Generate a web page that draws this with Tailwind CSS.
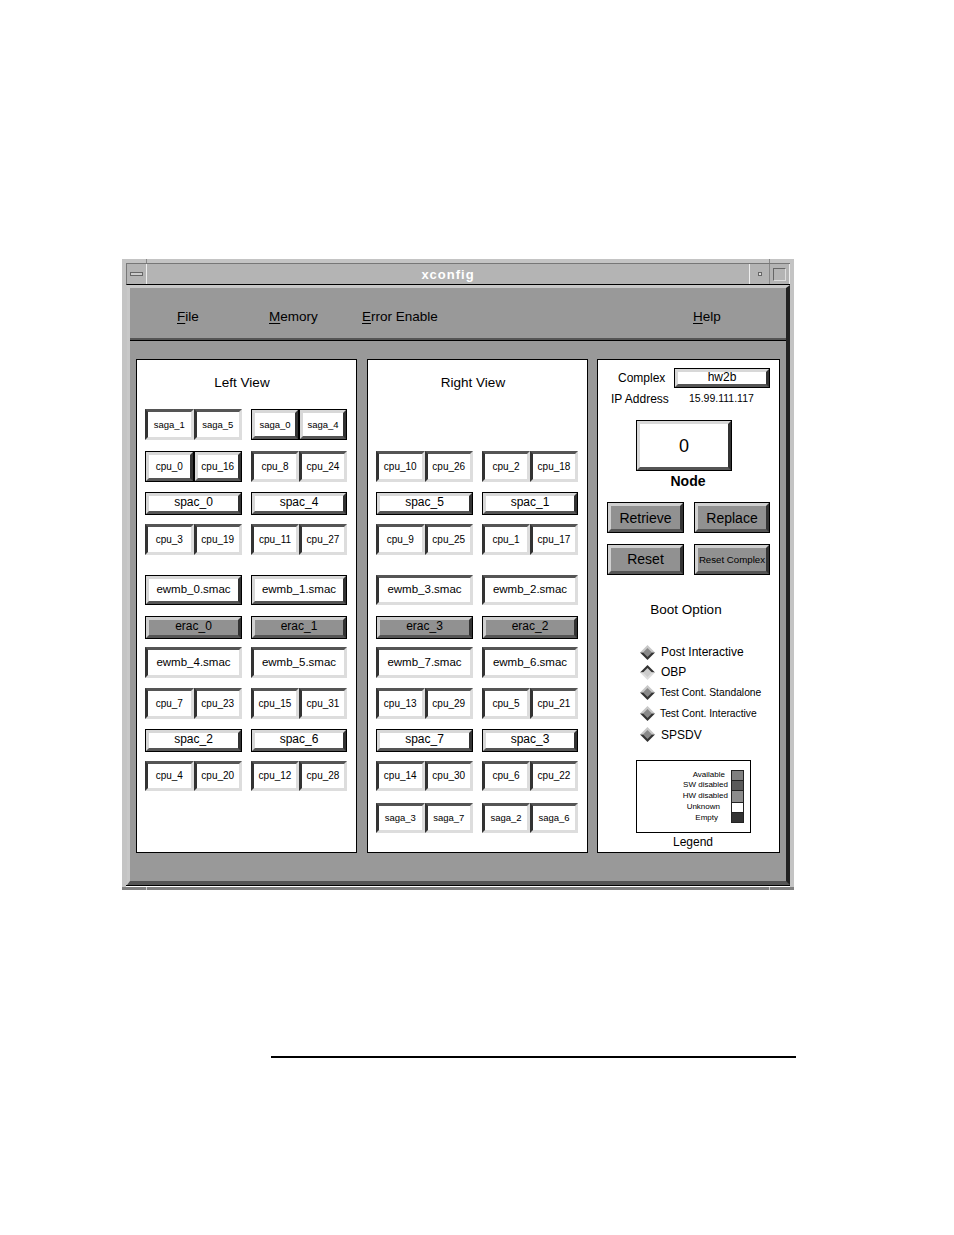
<!DOCTYPE html>
<html lang="en">
<head>
  <meta charset="UTF-8" />
  <title>xconfig</title>
  <script src="https://cdn.jsdelivr.net/npm/@tailwindcss/browser@4"></script>
</head>
<body class="bg-white text-black font-['Liberation_Sans',sans-serif]">
  <div class="pt-[259px] pl-[122px]">
    <div class="w-[672px] bg-[#c4c4c4]">
      <!-- resize handles in the frame -->
      <div class="flex h-[4px] pl-[24px]">
        <span class="w-px bg-[#888]"></span>
        <span class="w-px ml-[622px] bg-[#888]"></span>
      </div>
      <div class="pl-[4px] pr-[4px]">
        <!-- title bar -->
        <div class="flex h-[22px] bg-[#b4b4b4] border-t border-l border-[#777] border-b border-b-black">
          <div class="w-[20px] flex items-center justify-center border-r border-r-[#eee]">
            <div class="w-[13px] h-[4px] bg-[#ccc] border border-[#666]"></div>
          </div>
          <div class="flex-1 flex items-center justify-center pt-[2px] text-[13px] font-bold tracking-[1px] text-white">xconfig</div>
          <div class="w-[21px] flex items-center justify-center border-l border-l-[#eee] border-r border-r-[#888]">
            <div class="w-[4px] h-[4px] bg-[#ddd] border border-[#666]"></div>
          </div>
          <div class="w-[20px] flex items-center justify-center border-r border-r-[#eee]">
            <div class="w-[13px] h-[13px] border border-[#666] border-r-[#ddd] border-b-[#ddd]"></div>
          </div>
        </div>
        <!-- main window -->
        <div class="ml-px border-t-[3px] border-l-[3px] border-r-[4px] border-b-[4px] border-t-[#c8c8c8] border-l-[#c8c8c8] border-r-[#222] border-b-[#555] bg-[#999]">
          <div class="flex h-[50px] pl-[47px] pt-[12px] text-[13.5px] leading-[34px]">
            <div class="w-[92px]"><u class="underline-offset-2">F</u>ile</div>
            <div class="w-[93px]"><u class="underline-offset-2">M</u>emory</div>
            <div class="w-[331px]"><u class="underline-offset-2">E</u>rror Enable</div>
            <div><u class="underline-offset-2">H</u>elp</div>
          </div>
          <div class="h-[3px] bg-[#555] border-b border-b-black"></div>
          <div class="flex h-[540px] pt-[18px] pl-[6px]">
            <div id="left" class="w-[221px] h-[494px] bg-white border border-black pl-[8px]"></div>
            <div id="right" class="ml-[10px] w-[221px] h-[494px] bg-white border border-black pl-[8px]"></div>

            <!-- controls -->
            <div class="ml-[9px] w-[183px] h-[494px] bg-white border border-black">
              <div class="flex items-center h-[20px] mt-[8px] pl-[20px] text-[12px]">
                <span class="w-[56px]">Complex</span>
                <span id="complex" class="w-[96px] h-[20px] block"></span>
              </div>
              <div class="flex items-center h-[14px] mt-[4px] pl-[13px] text-[12px]">
                <span class="w-[78px]">IP Address</span>
                <span class="text-[10.5px]">15.99.111.117</span>
              </div>
              <div id="node" class="w-[96px] h-[51px] ml-[38px] mt-[14px]"></div>
              <div class="w-[180px] h-[16px] mt-[2px] text-center text-[14px] font-bold leading-[16px]">Node</div>
              <div class="flex gap-[10px] ml-[9px] mt-[13px] h-[31px]">
                <div id="retrieve" class="w-[77px]"></div>
                <div id="replace" class="w-[76px]"></div>
              </div>
              <div class="flex gap-[10px] ml-[9px] mt-[11px] h-[31px]">
                <div id="reset" class="w-[77px]"></div>
                <div id="resetComplex" class="w-[76px]"></div>
              </div>
              <div class="w-[176px] h-[18px] mt-[26px] text-center text-[13.5px] leading-[18px]">Boot Option</div>
              <div id="boot" class="ml-[42px] mt-[23px]"></div>
              <div class="flex flex-col ml-[38px] mt-[15px] w-[115px] h-[73px] border border-black pt-[9px] pr-[6px]">
                <div class="flex justify-end items-center h-[10px] text-[8px] leading-none"><span class="pr-[6px]">Available</span><span class="w-[13px] h-full bg-[#808080] border-x border-t border-[#222]"></span></div>
                <div class="flex justify-end items-center h-[10px] text-[8px] leading-none"><span class="pr-[3px]">SW disabled</span><span class="w-[13px] h-full bg-[#5a5a5a] border-x border-t border-[#222]"></span></div>
                <div class="flex justify-end items-center h-[12px] text-[8px] leading-none"><span class="pr-[3px]">HW disabled</span><span class="w-[13px] h-full bg-[#8c8c8c] border-x border-t border-[#222]"></span></div>
                <div class="flex justify-end items-center h-[10px] text-[8px] leading-none"><span class="pr-[11px]">Unknown</span><span class="w-[13px] h-full bg-white border-x border-t border-[#222]"></span></div>
                <div class="flex justify-end items-center h-[11px] text-[8px] leading-none"><span class="pr-[13px]">Empty</span><span class="w-[13px] h-full bg-[#333] border border-[#222]"></span></div>
              </div>
              <div class="h-[14px] mt-[2px] pl-[75px] text-[12px] leading-[14px]">Legend</div>
            </div>
          </div>
        </div>
        <div class="h-px bg-black"></div>
      </div>
      <div class="h-px bg-white mx-[4px]"></div>
      <div class="flex h-[3px] pl-[24px] bg-[#808080]">
        <span class="w-px bg-[#ccc]"></span>
        <span class="w-px ml-[622px] bg-[#ccc]"></span>
      </div>
    </div>
  </div>
  <div class="ml-[271px] mt-[166px] w-[525px] h-[2px] bg-black"></div>

  <script>
    const FACE_RAISED = "flex items-center justify-center h-full leading-none border-[3px] border-t-[#d8d8d8] border-l-[#d8d8d8] border-r-[#333] border-b-[#555] bg-white";
    const FACE_GRAY = "flex items-center justify-center h-full leading-none border-[3px] border-t-[#d0d0d0] border-l-[#d0d0d0] border-r-[#333] border-b-[#555] bg-[#919191]";
    const FACE_SUNK = "flex items-center justify-center h-full leading-none border-[3px] border-t-[#555] border-l-[#333] border-r-[#ddd] border-b-[#ddd] bg-white";

    // kind: r raised, g gray raised, s sunk
    function btn(kind, label, size) {
      const face = kind === "s" ? FACE_SUNK : kind === "g" ? FACE_GRAY : FACE_RAISED;
      const inner = `<span class="${face} ${size}">${label}</span>`;
      if (kind === "s") return `<div class="flex-1 min-w-0 h-full">${inner}</div>`;
      return `<div class="flex-1 min-w-0 h-full border border-black">${inner}</div>`;
    }

    function col(kind, labels, size) {
      return `<div class="flex h-full">${labels.map(l => btn(kind, l, size)).join("")}</div>`;
    }

    const ROW = [
      "grid grid-cols-[97px_96px] gap-x-[9px] h-[31px] mt-0",
      "grid grid-cols-[97px_96px] gap-x-[9px] h-[31px] mt-[11px]",
      "grid grid-cols-[97px_96px] gap-x-[9px] h-[21px] mt-[10px]",
      "grid grid-cols-[97px_96px] gap-x-[9px] h-[31px] mt-[11px]",
      "grid grid-cols-[97px_96px] gap-x-[9px] h-[30px] mt-[20px]",
      "grid grid-cols-[97px_96px] gap-x-[9px] h-[20px] mt-[11px]",
      "grid grid-cols-[97px_96px] gap-x-[9px] h-[31px] mt-[11px]",
      "grid grid-cols-[97px_96px] gap-x-[9px] h-[31px] mt-[10px]",
      "grid grid-cols-[97px_96px] gap-x-[9px] h-[21px] mt-[10px]",
      "grid grid-cols-[97px_96px] gap-x-[9px] h-[30px] mt-[11px]",
      "grid grid-cols-[97px_96px] gap-x-[9px] h-[30px] mt-[12px]"
    ];
    const ROW_TEXT = [
      "text-[9.5px]", "text-[10px]", "text-[12px] pb-[3px]", "text-[10px]", "text-[11.5px]", "text-[12px] pb-[3px]",
      "text-[11.5px]", "text-[10px]", "text-[12px] pb-[3px]", "text-[10px]", "text-[9.5px]"
    ];

    function panel(id, title, rows) {
      let html = `<div class="h-[49px] pt-[13px] pr-[17px] text-center text-[13.5px] leading-[20px]">${title}</div>`;
      rows.forEach((r, i) => {
        if (!r) { html += `<div class="${ROW[i]}"></div>`; return; }
        html += `<div class="${ROW[i]}">${col(r[0], r[1], ROW_TEXT[i])}${col(r[2], r[3], ROW_TEXT[i])}</div>`;
      });
      document.getElementById(id).innerHTML = html;
    }

    panel("left", "Left View", [
      ["s", ["saga_1", "saga_5"], "r", ["saga_0", "saga_4"]],
      ["r", ["cpu_0", "cpu_16"], "s", ["cpu_8", "cpu_24"]],
      ["r", ["spac_0"], "r", ["spac_4"]],
      ["s", ["cpu_3", "cpu_19"], "s", ["cpu_11", "cpu_27"]],
      ["r", ["ewmb_0.smac"], "r", ["ewmb_1.smac"]],
      ["g", ["erac_0"], "g", ["erac_1"]],
      ["s", ["ewmb_4.smac"], "s", ["ewmb_5.smac"]],
      ["s", ["cpu_7", "cpu_23"], "s", ["cpu_15", "cpu_31"]],
      ["r", ["spac_2"], "r", ["spac_6"]],
      ["s", ["cpu_4", "cpu_20"], "s", ["cpu_12", "cpu_28"]]
    ]);

    panel("right", "Right View", [
      null,
      ["s", ["cpu_10", "cpu_26"], "s", ["cpu_2", "cpu_18"]],
      ["r", ["spac_5"], "r", ["spac_1"]],
      ["s", ["cpu_9", "cpu_25"], "s", ["cpu_1", "cpu_17"]],
      ["s", ["ewmb_3.smac"], "s", ["ewmb_2.smac"]],
      ["g", ["erac_3"], "g", ["erac_2"]],
      ["s", ["ewmb_7.smac"], "s", ["ewmb_6.smac"]],
      ["s", ["cpu_13", "cpu_29"], "s", ["cpu_5", "cpu_21"]],
      ["r", ["spac_7"], "r", ["spac_3"]],
      ["s", ["cpu_14", "cpu_30"], "s", ["cpu_6", "cpu_22"]],
      ["s", ["saga_3", "saga_7"], "s", ["saga_2", "saga_6"]]
    ]);

    document.getElementById("complex").innerHTML = col("r", ["hw2b"], "text-[12px] pb-[2px]");
    document.getElementById("node").innerHTML = col("r", ["0"], "text-[18px]");
    document.getElementById("retrieve").innerHTML = col("g", ["Retrieve"], "text-[14px]");
    document.getElementById("replace").innerHTML = col("g", ["Replace"], "text-[14px]");
    document.getElementById("reset").innerHTML = col("g", ["Reset"], "text-[14px] pb-[2px]");
    document.getElementById("resetComplex").innerHTML = col("g", ["Reset Complex"], "text-[9.7px] whitespace-nowrap");

    const OFF = '<svg width="15" height="15" viewBox="0 0 15 15"><polygon points="7.5,0 15,7.5 0,7.5" fill="#c8c8c8"/><polygon points="0,7.5 15,7.5 7.5,15" fill="#333"/><polygon points="7.5,3 12,7.5 7.5,12 3,7.5" fill="#888"/></svg>';
    const ON = '<svg width="15" height="15" viewBox="0 0 15 15"><polygon points="7.5,0 15,7.5 0,7.5" fill="#333"/><polygon points="0,7.5 15,7.5 7.5,15" fill="#ddd"/><polygon points="7.5,3 12,7.5 7.5,12 3,7.5" fill="#ccc"/></svg>';
    const BOOT = [
      [OFF, "Post Interactive", "text-[12px] h-[20px] gap-[6px]"],
      [ON, "OBP", "text-[12px] h-[20px] gap-[6px]"],
      [OFF, "Test Cont. Standalone", "text-[10.3px] h-[21px] gap-[5px]"],
      [OFF, "Test Cont. Interactive", "text-[10.3px] h-[21px] gap-[5px]"],
      [OFF, "SPSDV", "text-[12px] h-[21px] gap-[6px]"]
    ];
    document.getElementById("boot").innerHTML = BOOT.map(b =>
      `<div class="flex items-center whitespace-nowrap ${b[2]}">${b[0]}<span>${b[1]}</span></div>`
    ).join("");
  </script>
</body>
</html>
